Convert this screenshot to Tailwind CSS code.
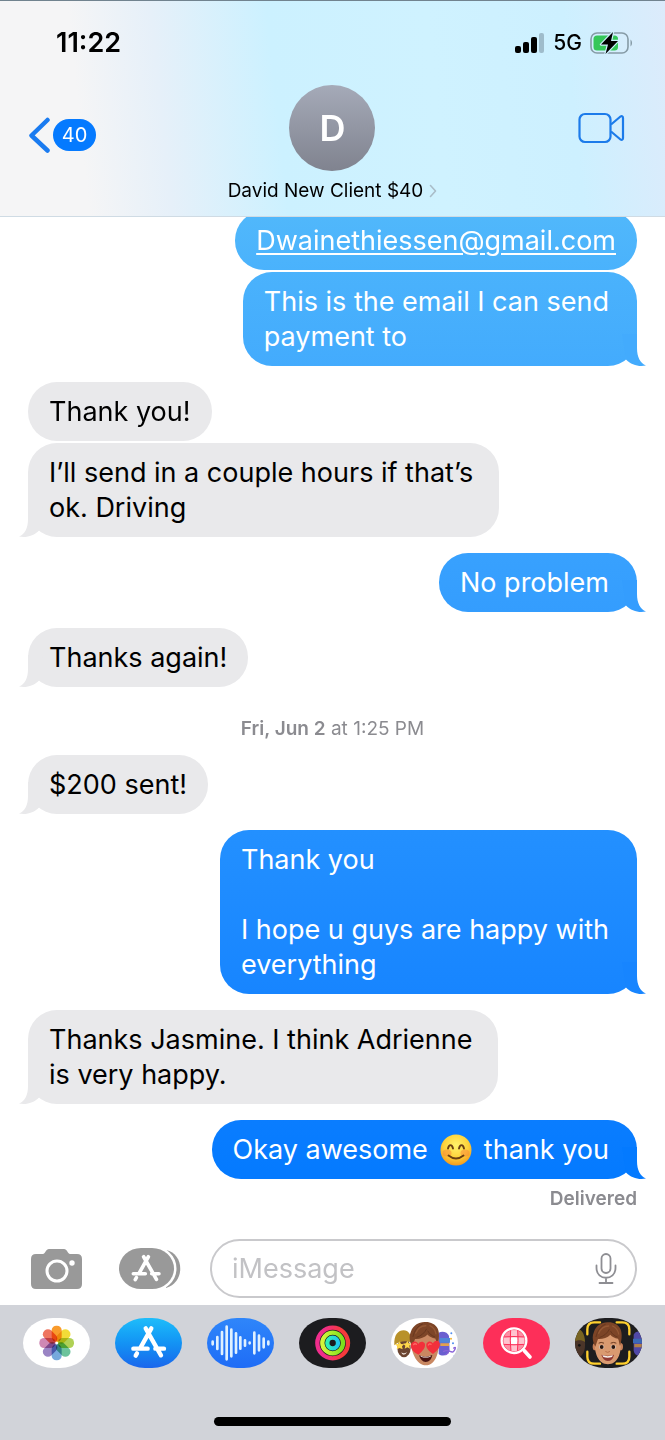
<!DOCTYPE html>
<html lang="en">
<head>
    <meta charset="UTF-8">
    <meta name="viewport" content="width=device-width, initial-scale=1.0">
    <title>David New Client $40</title>
    <script src="https://cdn.jsdelivr.net/npm/@tailwindcss/browser@4"></script>
</head>
<body class="h-screen flex flex-col overflow-hidden bg-white text-black font-['Inter','Liberation_Sans',sans-serif]">

    <!-- Shared shapes -->
    <svg class="hidden" aria-hidden="true">
        <symbol id="tail" viewBox="0 0 24 32">
            <path d="M0 0H15V14C15 23 18 29 24 31.500C17 33 9 31 4 25.500Z"/>
        </symbol>
        <symbol id="store" viewBox="0 0 201 150">
            <g fill="none" stroke="currentColor" stroke-width="13" stroke-linecap="round">
                <path d="M109 31L77 88M92 31L138 112M55 92H98M121 92H147M66 106L62 113"/>
            </g>
        </symbol>
        <symbol id="hair" viewBox="0 0 100 75">
            <path fill="#7d4527" d="M12 74C4 60 1 44 8 29C14 11 30 2 48 1C62-1 80 6 87 20C93 32 92 54 86 72C84 64 83 56 80 50C70 48 62 44 57 38C48 48 32 52 20 51C17 58 15 66 12 74Z"/>
            <path fill="none" stroke="#9a5c38" stroke-width="4" stroke-linecap="round" opacity=".8" d="M22 34C28 20 40 12 52 12M64 12C74 17 80 25 82 36"/>
            <path fill="none" stroke="#5c301a" stroke-width="2.500" stroke-linecap="round" opacity=".8" d="M14 44C18 26 28 12 42 7M58 28C62 36 70 42 78 45M26 46C38 42 48 34 54 22"/>
        </symbol>
    </svg>

    <!-- Header -->
    <header class="shrink-0 border-t border-t-[#71838f] border-b border-b-[#cfdbe4] bg-[linear-gradient(84deg,#f5f5f6_0%,#f5f5f6_13%,#e6f0f9_25%,#ccf1ff_42%,#cff2ff_65%,#cdf0ff_85%,#dcebfb_100%)]">
        <div class="h-[84px] flex items-center justify-between pl-14 pr-8">
            <time class="text-[27px] font-semibold">11:22</time>
            <div class="flex items-center">
                <svg class="w-[30px] h-5" viewBox="0 0 30 20" aria-label="Signal">
                    <rect x="0" y="13" width="6" height="7" rx="2"/>
                    <rect x="8" y="9" width="6" height="11" rx="2"/>
                    <rect x="16" y="4" width="6" height="16" rx="2"/>
                    <rect x="24" y="0" width="5" height="20" rx="2" fill="#9fbccb"/>
                </svg>
                <span class="mx-2 text-[21px] font-medium">5G</span>
                <svg class="w-[43px] h-[22px]" viewBox="0 0 43 22" aria-label="Battery charging">
                    <rect x="1" y="1" width="37" height="20" rx="6" fill="none" stroke="#869ba6" stroke-width="1.6"/>
                    <path d="M40.500 7.500C42.500 9 42.500 13 40.500 14.500Z" fill="#869ba6"/>
                    <rect x="3.500" y="3.500" width="24.500" height="15" rx="3.500" fill="#35c759"/>
                    <path d="M23 0L11 12.500H18L15.500 22L28 9H21Z" fill="#000" stroke="#cdf1fd" stroke-width="2.400" paint-order="stroke" stroke-linejoin="round"/>
                </svg>
            </div>
        </div>
        <div class="grid grid-cols-[1fr_auto_1fr] items-start h-[131px]">
            <button type="button" aria-label="Back" class="justify-self-start flex items-center gap-[3px] h-[100px] pl-7">
                <svg class="w-[22px] h-9" viewBox="0 0 22 36" fill="none" stroke="#1a7bf0" stroke-width="4.500" stroke-linecap="round" stroke-linejoin="round"><path d="M19.500 3L3.500 18.500L19.500 33.500"/></svg>
                <span class="w-[43px] h-8 rounded-full bg-[#057aff] text-white text-[20px] leading-8 text-center">40</span>
            </button>
            <button type="button" class="flex flex-col items-center gap-2">
                <span class="size-[86px] rounded-full bg-linear-to-b from-[#a5aab8] to-[#80838f] text-white text-4xl font-semibold flex items-center justify-center">D</span>
                <span class="flex items-center gap-1.5 text-[19px] leading-6">David New Client $40
                    <svg class="w-2 h-3.5" viewBox="0 0 8 14" fill="none" stroke="#a9bcc8" stroke-width="1.600" stroke-linecap="round" stroke-linejoin="round"><path d="M1.500 1.500L6.500 7L1.500 12.500"/></svg>
                </span>
            </button>
            <button type="button" aria-label="FaceTime" class="justify-self-end flex items-center h-[86px] pr-10">
                <svg class="w-[47px] h-8" viewBox="0 0 47 32" fill="none" stroke="#1c7bea" stroke-width="2.200" stroke-linejoin="round"><rect x="1.500" y="2" width="31" height="28" rx="5.500"/><path d="M33 12.500L42.500 4.500Q45 3.500 45 6V26Q45 28.500 42.500 27.500L33 19.500"/></svg>
            </button>
        </div>
    </header>

    <!-- Conversation -->
    <main class="flex-1 min-h-0 overflow-hidden flex flex-col justify-end px-7 text-[27px] leading-[35px]">
        <p class="self-end shrink-0 rounded-[29px] bg-linear-to-b from-[#51b8fb] to-[#4ab2fc] text-white px-[21px] py-3"><a href="mailto:Dwainethiessen@gmail.com" class="underline underline-offset-3 decoration-2">Dwainethiessen@gmail.com</a></p>
        <p class="relative self-end shrink-0 mt-0.5 rounded-[29px] bg-linear-to-b from-[#4ab2fc] to-[#43abfd] text-white pl-[21px] pr-7 py-3">This is the email I can send<br>payment to
            <svg class="absolute -right-[9px] bottom-0 w-6 h-8 fill-[#43abfd]" aria-hidden="true"><use href="#tail"/></svg>
        </p>
        <p class="self-start shrink-0 mt-4 rounded-[29px] bg-[#e9e9eb] px-[21px] py-3">Thank you!</p>
        <p class="relative self-start shrink-0 mt-0.5 rounded-[29px] bg-[#e9e9eb] pl-[21px] pr-[26px] py-3">I’ll send in a couple hours if that’s<br>ok. Driving
            <svg class="absolute -left-[9px] bottom-0 w-6 h-8 -scale-x-100 fill-[#e9e9eb]" aria-hidden="true"><use href="#tail"/></svg>
        </p>
        <p class="relative self-end shrink-0 mt-4 rounded-[29px] bg-linear-to-b from-[#38a1fe] to-[#349dfe] text-white pl-[21px] pr-7 py-3">No problem
            <svg class="absolute -right-[9px] bottom-0 w-6 h-8 fill-[#349dfe]" aria-hidden="true"><use href="#tail"/></svg>
        </p>
        <p class="relative self-start shrink-0 mt-4 rounded-[29px] bg-[#e9e9eb] px-[21px] py-3">Thanks again!
            <svg class="absolute -left-[9px] bottom-0 w-6 h-8 -scale-x-100 fill-[#e9e9eb]" aria-hidden="true"><use href="#tail"/></svg>
        </p>
        <time class="self-center shrink-0 mt-[30px] mb-[14px] text-[19px] leading-6 text-[#8b8b90]"><b class="font-semibold">Fri, Jun 2</b> at 1:25 PM</time>
        <p class="relative self-start shrink-0 rounded-[29px] bg-[#e9e9eb] px-[21px] py-3">$200 sent!
            <svg class="absolute -left-[9px] bottom-0 w-6 h-8 -scale-x-100 fill-[#e9e9eb]" aria-hidden="true"><use href="#tail"/></svg>
        </p>
        <p class="relative self-end shrink-0 mt-4 rounded-[29px] bg-linear-to-b from-[#2390ff] to-[#1785ff] text-white pl-[21px] pr-7 py-3">Thank you<br><br>I hope u guys are happy with<br>everything
            <svg class="absolute -right-[9px] bottom-0 w-6 h-8 fill-[#1785ff]" aria-hidden="true"><use href="#tail"/></svg>
        </p>
        <p class="relative self-start shrink-0 mt-4 rounded-[29px] bg-[#e9e9eb] pl-[21px] pr-[26px] py-3">Thanks Jasmine. I think Adrienne<br>is very happy.
            <svg class="absolute -left-[9px] bottom-0 w-6 h-8 -scale-x-100 fill-[#e9e9eb]" aria-hidden="true"><use href="#tail"/></svg>
        </p>
        <p class="relative self-end shrink-0 mt-4 rounded-[29px] bg-linear-to-b from-[#0a7dff] to-[#047aff] text-white pl-[21px] pr-7 py-3 flex items-center gap-3">Okay awesome
            <svg class="size-8" viewBox="0 0 32 32" role="img" aria-label="Smiling face">
                <defs><radialGradient id="smile" cx=".5" cy=".35" r=".65"><stop offset="0" stop-color="#fff36b"/><stop offset=".6" stop-color="#fdd33c"/><stop offset="1" stop-color="#f39a1e"/></radialGradient></defs>
                <circle cx="16" cy="16" r="15.500" fill="url(#smile)"/>
                <ellipse cx="7" cy="19" rx="4.500" ry="3.500" fill="#f9863a" opacity=".5"/>
                <ellipse cx="25" cy="19" rx="4.500" ry="3.500" fill="#f9863a" opacity=".5"/>
                <path d="M8 14.500C9 10 12 10 13 14.500M19 14.500C20 10 23 10 24 14.500M8.500 21.500Q16 27.500 23.500 21.500" fill="none" stroke="#6b3f12" stroke-width="1.900" stroke-linecap="round"/>
            </svg>
            thank you
            <svg class="absolute -right-[9px] bottom-0 w-6 h-8 fill-[#047aff]" aria-hidden="true"><use href="#tail"/></svg>
        </p>
        <span class="self-end shrink-0 mt-2 mb-7 text-[19px] leading-6 font-semibold text-[#8b8b90]">Delivered</span>
    </main>

    <!-- Message bar -->
    <form class="shrink-0 flex items-center pl-[31px] pr-7 pb-[7px]">
        <button type="button" aria-label="Camera" class="shrink-0">
            <svg class="w-[51px] h-[41px]" viewBox="0 0 51 41">
                <path fill="#999" d="M5 6H12C14 6 15 1 18 1H33C36 1 37 6 39 6H46Q51 6 51 11V36Q51 41 46 41H5Q0 41 0 36V11Q0 6 5 6Z"/>
                <circle cx="26" cy="23" r="10" fill="none" stroke="#fff" stroke-width="3"/>
                <circle cx="41" cy="15" r="2.700" fill="#fff"/>
            </svg>
        </button>
        <button type="button" aria-label="Apps" class="shrink-0 ml-[37px]">
            <svg class="w-[62px] h-[41px]" viewBox="0 0 62 41">
                <path fill="#999" d="M47 2C66 6 66 35 47 40Z"/>
                <rect x="0" y="0" width="55" height="41" rx="22" ry="20.500" fill="#999" stroke="#fff" stroke-width="5" paint-order="stroke"/>
                <svg x="-1" y="0" width="56" height="42" color="#fff"><use href="#store"/></svg>
            </svg>
        </button>
        <div class="relative flex-1 ml-[29px]">
            <input type="text" aria-label="Message" placeholder="iMessage" class="w-full h-[59px] rounded-full border-2 border-[#c9c9cc] pl-5 pr-16 text-[27px] placeholder:text-[#c2c2c5] outline-none">
            <button type="button" aria-label="Dictate" class="absolute right-5 top-[14px]">
                <svg class="w-[22px] h-[31px]" viewBox="0 0 22 31" fill="none" stroke="#8e8e93" stroke-width="1.800" stroke-linecap="round"><rect x="6.500" y="1" width="9" height="19" rx="4.500"/><path d="M1.500 12.500V15C1.500 28 20.500 28 20.500 15V12.500M11 25V30M4.500 30H17.500"/></svg>
            </button>
        </div>
    </form>

    <!-- App drawer -->
    <footer class="shrink-0 h-[135px] flex flex-col items-center justify-between bg-[#d1d3d9] pt-[13px] pb-3.5">
        <nav class="w-full flex justify-between px-[23px]">
            <a href="#" aria-label="Photos" class="w-[67px] h-[50px] overflow-hidden rounded-[30px/25px] bg-white">
                <svg viewBox="0 0 201 150" class="w-full h-full">
                    <g transform="translate(101 75)">
                        <rect x="-15" y="-52" width="30" height="48" rx="14" fill="#f99b2c" class="mix-blend-multiply"/>
                        <rect x="-15" y="-52" width="30" height="48" rx="14" fill="#f2dc38" class="mix-blend-multiply" transform="rotate(45)"/>
                        <rect x="-15" y="-52" width="30" height="48" rx="14" fill="#b0d155" class="mix-blend-multiply" transform="rotate(90)"/>
                        <rect x="-15" y="-52" width="30" height="48" rx="14" fill="#6cc39c" class="mix-blend-multiply" transform="rotate(135)"/>
                        <rect x="-15" y="-52" width="30" height="48" rx="14" fill="#76a9dc" class="mix-blend-multiply" transform="rotate(180)"/>
                        <rect x="-15" y="-52" width="30" height="48" rx="14" fill="#9a84c4" class="mix-blend-multiply" transform="rotate(225)"/>
                        <rect x="-15" y="-52" width="30" height="48" rx="14" fill="#cf88b4" class="mix-blend-multiply" transform="rotate(270)"/>
                        <rect x="-15" y="-52" width="30" height="48" rx="14" fill="#ee7560" class="mix-blend-multiply" transform="rotate(315)"/>
                    </g>
                </svg>
            </a>
            <a href="#" aria-label="App Store" class="w-[67px] h-[50px] overflow-hidden rounded-[30px/25px] bg-linear-to-b from-[#1fbdfa] to-[#1b66ec] text-white">
                <svg class="w-full h-full"><use href="#store"/></svg>
            </a>
            <a href="#" aria-label="Audio" class="w-[67px] h-[50px] overflow-hidden rounded-[30px/25px] bg-linear-to-b from-[#2f86fa] to-[#1f6cf6]">
                <svg viewBox="0 0 201 150" class="w-full h-full" fill="none" stroke="#dff1ff" stroke-width="8" stroke-linecap="round">
                    <path d="M17 71V79M31 57V93M45 42V108M59 26V124M73 35V115M87 46V104M100 58V92M114 67V83M128 74V76M142 44V106M156 53V97M170 62V88M184 71V79"/>
                </svg>
            </a>
            <a href="#" aria-label="Fitness" class="w-[67px] h-[50px] overflow-hidden rounded-[30px/25px] bg-[#1c1c1f]">
                <svg viewBox="0 0 201 150" class="w-full h-full" fill="none" stroke-width="13">
                    <defs><linearGradient id="move" x1="0" x2="1"><stop offset=".2" stop-color="#f02d8c"/><stop offset=".8" stop-color="#f53a3c"/></linearGradient><linearGradient id="exercise" x1="0" x2="1"><stop offset="0" stop-color="#d4f53c"/><stop offset="1" stop-color="#7be01c"/></linearGradient><linearGradient id="stand" x1="0" x2="1"><stop offset="0" stop-color="#2ff0b4"/><stop offset="1" stop-color="#22c8ee"/></linearGradient></defs>
                    <circle cx="101" cy="75" r="46" stroke="url(#move)"/>
                    <circle cx="101" cy="75" r="31" stroke="url(#exercise)"/>
                    <circle cx="101" cy="75" r="16" stroke="url(#stand)"/>
                </svg>
            </a>
            <a href="#" aria-label="Memoji stickers" class="w-[67px] h-[50px] overflow-hidden rounded-[30px/25px] bg-white">
                <svg viewBox="0 0 201 150" class="w-full h-full">
                    <ellipse cx="39" cy="90" rx="20" ry="28" fill="#6b4531"/>
                    <path fill="#b8912a" d="M10 82C8 50 22 37 38 37C52 37 62 50 62 74C44 66 24 70 10 82Z"/>
                    <path fill="#ffd84a" d="M26 70L30 78L39 79L33 85L35 94L26 90L17 94L19 85L12 79L22 78ZM49 68L53 76L61 77L55 83L57 92L49 88L41 92L43 83L36 77L45 76Z"/>
                    <path fill="#e8dcd4" d="M31 103Q39 109 48 102Q45 110 38 110Q32 110 31 103Z"/>
                    <path fill="#6a5fd0" d="M143 44C154 38 170 42 174 54L176 100C170 114 152 116 143 108Z"/>
                    <path fill="#4f86d8" d="M146 60H177V74H146Z"/>
                    <path fill="#e0a24e" d="M148 76H174V84H148Z"/>
                    <path fill="none" stroke="#8a63d8" stroke-width="4" stroke-linecap="round" d="M158 100C172 92 182 108 188 100S196 84 188 90M164 110L172 104"/>
                    <g fill="#4f8df0"><circle cx="181" cy="46" r="3"/><circle cx="186" cy="76" r="3"/><circle cx="190" cy="115" r="3"/></g>
                    <circle cx="180" cy="62" r="3" fill="#f2b32f"/>
                    <path fill="#c98862" d="M60 62C60 36 140 36 143 62C147 100 134 142 105 142C76 142 58 100 60 62Z"/>
                    <svg x="51" y="11" width="103" height="76"><use href="#hair"/></svg>
                    <path fill="#4a1512" d="M84 112Q104 121 124 111Q120 132 104 132Q90 131 84 112Z"/>
                    <path fill="#fff" d="M88 113Q104 120 120 113L118 116Q104 121 90 116Z"/>
                    <path fill="#f2303b" d="M83 110C63 102 54 84 63 74C71 67 79 71 82 78C86 70 96 68 101 76C106 88 94 100 83 110Z"/>
                    <path fill="#f2303b" d="M126 108C112 100 102 86 107 76C113 67 122 70 126 76C129 68 140 65 145 73C151 84 140 98 126 108Z"/>
                    <path fill="none" stroke="#ff6a64" stroke-width="4" stroke-linecap="round" d="M68 80Q72 75 76 79M112 81Q116 75 120 79"/>
                </svg>
            </a>
            <a href="#" aria-label="Images" class="w-[67px] h-[50px] overflow-hidden rounded-[30px/25px] bg-[#fd2f59]">
                <svg viewBox="0 0 201 150" class="w-full h-full" fill="none">
                    <circle cx="93" cy="68" r="32" fill="#fd8fa5"/>
                    <path fill="#ffc3cf" d="M84 37H104V56H84ZM62 58H82V78H62ZM105 58H124V78H105ZM84 80H104V99H84Z"/>
                    <path fill="#fff" d="M84 58H104V78H84Z"/>
                    <path stroke="#fd2f59" stroke-width="3" d="M83 36Q80 68 84 100M104 36Q107 68 103 100M61 57Q93 54 125 57M61 79Q93 82 125 79"/>
                    <circle cx="93" cy="68" r="37" stroke="#fff" stroke-width="7"/>
                    <path stroke="#fff" stroke-width="11" stroke-linecap="round" d="M124 98L141 117"/>
                </svg>
            </a>
            <a href="#" aria-label="Memoji" class="w-[67px] h-[50px] overflow-hidden rounded-[30px/25px] bg-[#1d1d1f]">
                <svg viewBox="0 0 201 150" class="w-full h-full">
                    <path fill="#4b3529" d="M0 64H28C34 84 28 112 12 118L0 110Z"/>
                    <path fill="#786423" d="M0 30C18 30 30 46 30 72C20 64 8 66 0 70Z"/>
                    <circle cx="13" cy="82" r="4" fill="#141414"/>
                    <path fill="#5048a6" d="M176 50C182 36 201 38 201 50V112C188 116 178 110 176 98Z"/>
                    <path fill="#3b69b4" d="M174 62H201V76H174Z"/>
                    <path fill="#b18046" d="M178 78H201V88H178Z"/>
                    <path fill="none" stroke="#ffd02e" stroke-width="7" stroke-linecap="round" d="M37 49V34Q37 13 58 13H75M125 13H142Q163 13 163 34V49M37 101V116Q37 137 58 137H75M125 137H142Q163 137 163 116V101"/>
                    <ellipse cx="60" cy="86" rx="7" ry="11" fill="#c98058"/><ellipse cx="137" cy="86" rx="7" ry="11" fill="#c98058"/>
                    <path fill="#d99a70" d="M60 64C60 42 136 42 137 64C141 106 128 139 99 139C70 139 56 106 60 64Z"/>
                    <svg x="49" y="12" width="100" height="75"><use href="#hair"/></svg>
                    <path fill="none" stroke="#6b3a20" stroke-width="3" stroke-linecap="round" d="M72 75Q78 71 86 75M108 75Q116 71 123 75"/>
                    <ellipse cx="80" cy="87" rx="8" ry="6" fill="#f3e6dd"/><ellipse cx="115" cy="87" rx="8" ry="6" fill="#f3e6dd"/>
                    <circle cx="80" cy="87" r="6" fill="#2b1710"/><circle cx="115" cy="87" r="6" fill="#2b1710"/>
                    <path fill="none" stroke="#b9714c" stroke-width="3" stroke-linecap="round" d="M92 101Q98 106 104 101"/>
                    <path fill="#8f3a33" d="M79 110Q98 116 117 110Q113 129 98 129Q84 128 79 110Z"/>
                    <path fill="#f7efe9" d="M82 112Q98 117 114 112L111 117Q98 121 85 117Z"/>
                </svg>
            </a>
        </nav>
        <div class="w-[237px] h-[9px] rounded-full bg-black"></div>
    </footer>
</body>
</html>
